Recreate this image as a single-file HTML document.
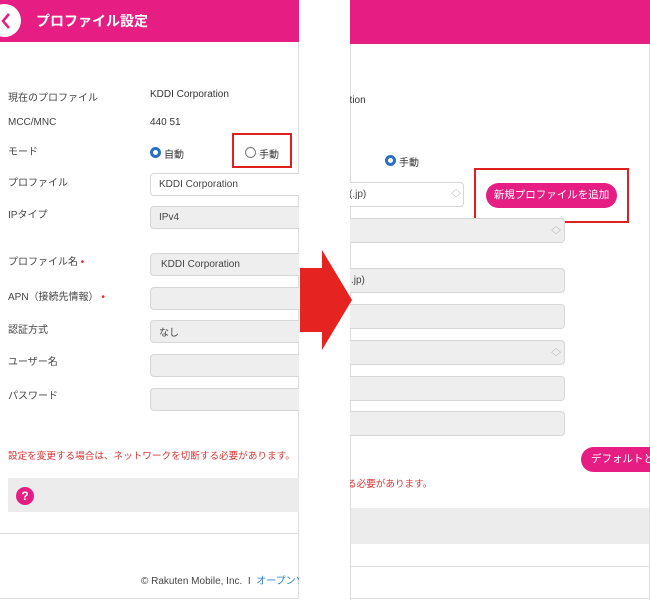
<!DOCTYPE html>
<html><head><meta charset="utf-8"><style>
*{margin:0;padding:0;box-sizing:border-box}
body{width:650px;height:600px;background:#fff;position:relative;overflow:hidden;font-family:"Liberation Sans","Noto Sans CJK JP",sans-serif;color:#333}
.a{position:absolute;white-space:nowrap}
.pan{position:absolute;top:0;height:600px;overflow:hidden}
.lab{font-size:10px;color:#444}
.val{font-size:10px;color:#333}
.in{position:absolute;border:1px solid #d6d6d6;border-radius:4px;background:#eee;font-size:10px;color:#444;padding-left:8px;display:flex;align-items:center}
.pk{background:#e61e84}
.req{color:#e23;font-size:10px}
.rad{position:absolute;width:11px;height:11px;border-radius:50%}
.sel{border:3px solid #2a6fc0;background:#fff}
.un{border:1px solid #777;background:#fff}
.upd{position:absolute;font-size:8px;color:#999;transform:scaleX(1.2)}
</style></head><body>
<div class="pan" style="left:0;width:299px">
<div class="a pk" style="left:0;top:0;width:299px;height:42px"></div>
<div class="a" style="left:-12px;top:4px;width:33px;height:33px;border-radius:50%;background:#fff"></div>
<svg class="a" style="left:0;top:12px" width="12" height="18"><path d="M9 2 L3 9 L9 16" stroke="#e61e84" stroke-width="2.5" fill="none"/></svg>
<div class="a" style="left:36px;top:11px;font-size:14px;color:#fff;font-weight:bold">プロファイル設定</div>
<div class="a" style="left:298px;top:42px;width:1px;height:557px;background:#ddd"></div>
<div class="a" style="left:0;top:598px;width:299px;height:1px;background:#ddd"></div>

<div class="a lab" style="left:8px;top:89px">現在のプロファイル</div>
<div class="a val" style="left:150px;top:89px">KDDI Corporation</div>
<div class="a lab" style="left:8px;top:117px">MCC/MNC</div>
<div class="a val" style="left:150px;top:117px">440 51</div>
<div class="a lab" style="left:8px;top:143px">モード</div>
<div class="rad sel" style="left:150px;top:147px"></div>
<div class="a val" style="left:164px;top:146px">自動</div>
<div class="rad un" style="left:245px;top:147px"></div>
<div class="a val" style="left:259px;top:146px">手動</div>
<div class="a" style="left:232px;top:133px;width:60px;height:35px;border:2px solid #e02020"></div>

<div class="a lab" style="left:8px;top:174px">プロファイル</div>
<div class="in" style="left:150px;top:173px;width:160px;height:23px;background:#fff">KDDI Corporation</div>
<div class="a lab" style="left:8px;top:206px">IPタイプ</div>
<div class="in" style="left:150px;top:206px;width:160px;height:23px">IPv4</div>
<div class="a lab" style="left:8px;top:253px">プロファイル名 <span class="req">•</span></div>
<div class="in" style="left:150px;top:253px;width:160px;height:23px;padding-left:10px">KDDI Corporation</div>
<div class="a lab" style="left:8px;top:288px">APN（接続先情報） <span class="req">•</span></div>
<div class="in" style="left:150px;top:287px;width:160px;height:23px"></div>
<div class="a lab" style="left:8px;top:321px">認証方式</div>
<div class="in" style="left:150px;top:320px;width:160px;height:23px">なし</div>
<div class="a lab" style="left:8px;top:353px">ユーザー名</div>
<div class="in" style="left:150px;top:354px;width:160px;height:23px"></div>
<div class="a lab" style="left:8px;top:387px">パスワード</div>
<div class="in" style="left:150px;top:388px;width:160px;height:23px"></div>

<div class="a" style="left:8px;top:448px;font-size:9.6px;color:#d33">設定を変更する場合は、ネットワークを切断する必要があります。</div>
<div class="a" style="left:8px;top:478px;width:291px;height:34px;background:#ececec"></div>
<div class="a" style="left:16px;top:487px;width:18px;height:18px;border-radius:50%;background:#e61e84;color:#fff;font-size:12px;font-weight:bold;text-align:center;line-height:18px">?</div>
<div class="a" style="left:0;top:533px;width:299px;height:1px;background:#ddd"></div>
<div class="a" style="left:141px;top:572px;font-size:10px;color:#444">© Rakuten Mobile, Inc.&nbsp; I&nbsp; <span style="color:#2a7fd0">オープンソース</span></div>
</div>

<div class="pan" style="left:350px;width:300px">
<div class="a pk" style="left:0;top:0;width:300px;height:44px"></div>
<div class="a" style="left:0;top:44px;width:1px;height:556px;background:#ddd"></div>
<div class="a" style="left:299px;top:44px;width:1px;height:556px;background:#ddd"></div>
<div class="a" style="left:0;top:598px;width:300px;height:1px;background:#ddd"></div>
<div class="a val" style="left:-6px;top:95px">ation</div>
<div class="rad sel" style="left:35px;top:155px"></div>
<div class="a val" style="left:49px;top:154px">手動</div>
<div class="in" style="left:-10px;top:182px;width:124px;height:25px;background:#fff;padding-left:8px">(.jp)</div>
<div class="upd" style="left:102px;top:188px">◇</div>
<div class="a pk" style="left:136px;top:183px;width:131px;height:25px;border-radius:13px;color:#fff;font-size:10.5px;text-align:center;line-height:25px">新規プロファイルを追加</div>
<div class="a" style="left:124px;top:168px;width:155px;height:55px;border:2px solid #e02020"></div>
<div class="in" style="left:-10px;top:218px;width:225px;height:25px"></div>
<div class="upd" style="left:202px;top:225px">◇</div>
<div class="in" style="left:-10px;top:268px;width:225px;height:25px;padding-left:10px">.jp)</div>
<div class="in" style="left:-10px;top:304px;width:225px;height:25px"></div>
<div class="in" style="left:-10px;top:340px;width:225px;height:25px"></div>
<div class="upd" style="left:202px;top:347px">◇</div>
<div class="in" style="left:-10px;top:376px;width:225px;height:25px"></div>
<div class="in" style="left:-10px;top:411px;width:225px;height:25px"></div>
<div class="a pk" style="left:231px;top:447px;width:90px;height:25px;border-radius:13px;color:#fff;font-size:10.5px;line-height:25px;padding-left:10px">デフォルトと</div>
<div class="a" style="left:-3px;top:476px;font-size:9.6px;color:#d33">る必要があります。</div>
<div class="a" style="left:1px;top:508px;width:298px;height:36px;background:#ececec"></div>
<div class="a" style="left:1px;top:566px;width:298px;height:1px;background:#ddd"></div>
</div>

<svg class="a" style="left:298px;top:248px" width="56" height="104"><path d="M2 20 H24 V2 L54 52 L24 102 V84 H2 Z" fill="#e52320"/></svg>
</body></html>
